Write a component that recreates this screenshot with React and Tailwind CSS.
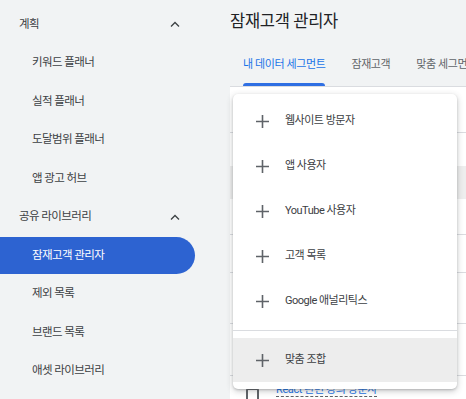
import React from "react";

const font = { fontFamily: '"Roboto", "Noto Sans CJK KR", sans-serif' };

const sections = [
  { title: "계획", items: ["키워드 플래너", "실적 플래너", "도달범위 플래너", "앱 광고 허브"] },
  { title: "공유 라이브러리", items: ["잠재고객 관리자", "제외 목록", "브랜드 목록", "애셋 라이브러리"] },
];

const menuItems = ["웹사이트 방문자", "앱 사용자", "YouTube 사용자", "고객 목록", "Google 애널리틱스"];

const ChevronUp = () => (
  <svg width="10" height="6" viewBox="0 0 10 6" fill="none">
    <path d="M1 5.5L5 1.5L9 5.5" stroke="#3c4043" strokeWidth="1.3" />
  </svg>
);

const Plus = () => (
  <svg width="13" height="13" viewBox="0 0 13 13">
    <path d="M6.5 0V13M0 6.5H13" stroke="#5f6368" strokeWidth="1.6" />
  </svg>
);

const Sidebar = () => (
  <div className="w-[230px] shrink-0 pt-[5px]">
    {sections.map((section) => (
      <div key={section.title}>
        <div className="flex h-[38.5px] items-center justify-between pl-[19px] pr-[50px] text-[11.5px] tracking-[-0.6px] text-[#3c4043]">
          <span>{section.title}</span>
          <ChevronUp />
        </div>
        {section.items.map((item) => {
          const active = item === "잠재고객 관리자";
          return (
            <div key={item} className="flex h-[38.5px] items-center">
              <div
                className={`flex h-[37px] w-[195px] items-center rounded-r-full pl-[32px] text-[11.5px] tracking-[-0.6px] ${
                  active ? "bg-[#2d63d1] text-white" : "text-[#3c4043]"
                }`}
              >
                {item}
              </div>
            </div>
          );
        })}
      </div>
    ))}
  </div>
);

const AddMenu = () => (
  <div className="absolute left-[3px] top-[7px] w-[224px] rounded-[5px] bg-white pt-[5px] pb-[7px] shadow-[0_2px_6px_rgba(60,64,67,0.3),0_1px_2px_rgba(60,64,67,0.2)]">
    {menuItems.map((item) => (
      <div key={item} className="flex h-[45px] items-center gap-[16px] pl-[23px] text-[11px] tracking-[-0.5px] text-[#3c4043]">
        <Plus />
        <span>{item}</span>
      </div>
    ))}
    <div className="mt-[6px] mb-[7px] h-px bg-[#dadce0]" />
    <div className="flex h-[44px] items-center gap-[16px] bg-[#ededed] pl-[23px] text-[11px] tracking-[-0.5px] text-[#3c4043]">
      <Plus />
      <span>맞춤 조합</span>
    </div>
  </div>
);

const Main = () => (
  <div className="flex min-w-0 flex-1 flex-col">
    <div className="pt-[11px] text-[16.5px] tracking-[-0.3px] text-[#202124] leading-[22px]">잠재고객 관리자</div>
    <div className="mt-[22px] flex items-end gap-[26px] whitespace-nowrap border-b border-[#dadce0] pl-[13px] text-[11px] tracking-[-0.4px]">
      <div className="flex flex-col items-center">
        <span className="text-[#1a73e8] leading-[20px]">내 데이터 세그먼트</span>
        <div className="mt-[8px] h-[3px] w-full rounded-t-[3px] bg-[#2f6fe3]" />
      </div>
      <span className="pb-[11px] leading-[20px] text-[#5f6368]">잠재고객</span>
      <span className="pb-[11px] leading-[20px] text-[#5f6368]">맞춤 세그먼트</span>
    </div>
    <div className="relative flex-1 bg-white">
      <div className="h-[46px] border-b border-[#dadce0]" />
      <div className="h-[33px]" />
      <div className="h-[33px] bg-[#eeeeee]" />
      <div className="h-[36px] border-b border-[#dadce0]" />
      <div className="h-[38px] border-b border-[#dadce0]" />
      <div className="h-[51px] border-b border-[#dadce0]" />
      <div className="h-[52px] border-b border-[#dadce0]" />
      <div className="flex items-start gap-[17px] pl-[16px] pt-[8px]">
        <div className="mt-[4px] h-[13px] w-[13px] shrink-0 rounded-[2px] border-2 border-[#5f6368]" />
        <span className="border-b border-dashed border-[#5f6368] text-[11px] leading-[12px] tracking-[-0.4px] text-[#1a73e8]">
          React 관련 강의 방문자
        </span>
      </div>
      <AddMenu />
    </div>
  </div>
);

export default function App() {
  return (
    <div className="flex h-[399px] w-[466px] overflow-hidden bg-[#f1f3f4]" style={font}>
      <Sidebar />
      <Main />
    </div>
  );
}
